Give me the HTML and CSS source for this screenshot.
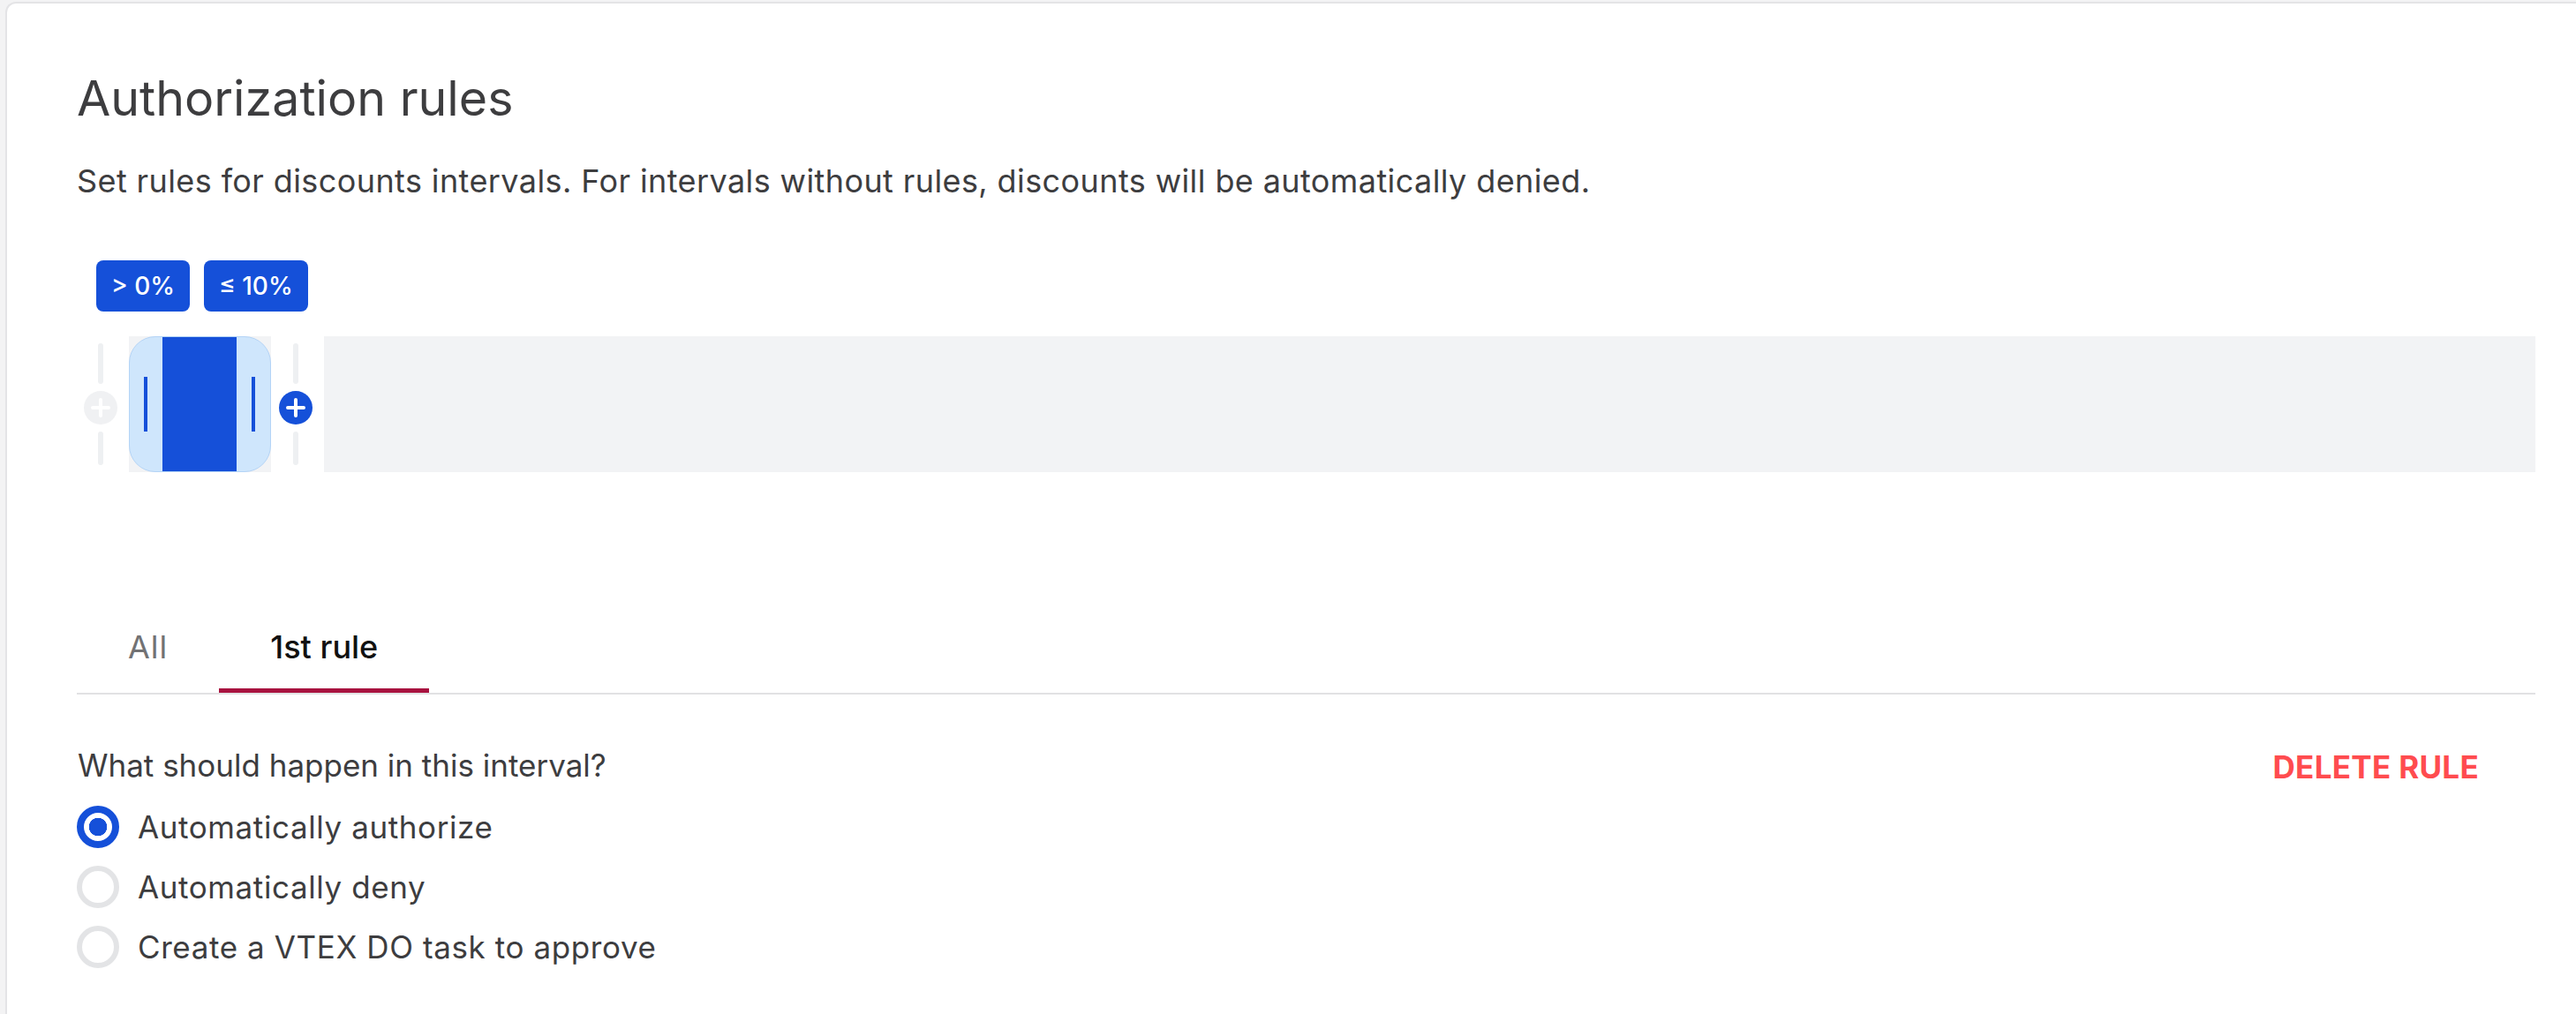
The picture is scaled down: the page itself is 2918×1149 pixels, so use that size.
FILE: index.html
```html
<!DOCTYPE html>
<html lang="en">
<head>
<meta charset="utf-8">
<title>Authorization rules</title>
<link rel="stylesheet" href="styles.css">
</head>
<body>
<main class="card">
  <h1 class="title">Authorization rules</h1>
  <p class="desc">Set rules for discounts intervals. For intervals without rules, discounts will be automatically denied.</p>

  <div class="badges">
    <span class="badge">&gt; 0%</span>
    <span class="badge">≤ 10%</span>
  </div>

  <div class="slider">
    <div class="handle">
      <span class="hline"></span>
      <span class="plus plus-off">
        <svg viewBox="0 0 38 38" width="38" height="38"><path d="M19 10v18M10 19h18" stroke="#fff" stroke-width="4" stroke-linecap="round"/></svg>
      </span>
      <span class="hline"></span>
    </div>
    <div class="segment">
      <div class="seg-inner">
        <span class="grip"></span>
        <span class="seg-fill"></span>
        <span class="grip"></span>
      </div>
    </div>
    <div class="handle">
      <span class="hline"></span>
      <span class="plus plus-on">
        <svg viewBox="0 0 38 38" width="38" height="38"><path d="M19 10v18M10 19h18" stroke="#fff" stroke-width="4" stroke-linecap="round"/></svg>
      </span>
      <span class="hline"></span>
    </div>
    <div class="track"></div>
  </div>

  <nav class="tabs">
    <span class="tab">All</span>
    <span class="tab tab-active">1st rule</span>
  </nav>

  <section class="rule">
    <div class="rule-left">
      <p class="question">What should happen in this interval?</p>
      <div class="options">
        <label class="option"><span class="radio radio-on"></span>Automatically authorize</label>
        <label class="option"><span class="radio"></span>Automatically deny</label>
        <label class="option"><span class="radio"></span>Create a VTEX DO task to approve</label>
      </div>
    </div>
    <button class="delete">DELETE RULE</button>
  </section>
</main>
</body>
</html>
```

FILE: styles.css
```css
html, body {
  margin: 0;
  padding: 0;
  overflow: hidden;
}
body {
  background: #f3f3f4;
  font-family: "Inter", "Liberation Sans", sans-serif;
  color: #3d3d3f;
  height: 1149px;
}
.card {
  box-sizing: border-box;
  margin: 2px 0 0 6px;
  background: #fff;
  border: 2px solid #e4e4e6;
  border-right: none;
  border-radius: 12px 0 0 0;
  padding: 75px 46px 0 79px;
  height: 1300px;
}
.title {
  margin: 0;
  font-size: 55.5px;
  line-height: 64px;
  font-weight: 400;
  color: #3d3d3f;
}
.desc {
  margin: 38px 0 0;
  font-size: 36px;
  line-height: 48px;
  color: #3d3d3f;
  letter-spacing: 0.4px;
}
.badges {
  display: flex;
  gap: 16px;
  margin: 66px 0 0 22px;
}
.badge {
  box-sizing: border-box;
  height: 58px;
  padding: 0 17px;
  border-radius: 8px;
  background: #1550d9;
  color: #fff;
  font-size: 28px;
  line-height: 58px;
  font-weight: 500;
}
.slider {
  display: flex;
  align-items: stretch;
  height: 154px;
  margin-top: 28px;
}
.handle {
  width: 38px;
  margin-left: 8px;
  display: flex;
  flex-direction: column;
  align-items: center;
  justify-content: center;
  gap: 8px;
}
.handle + .segment { margin-left: 13px; }
.segment + .handle { margin-left: 9px; }
.hline {
  width: 6px;
  height: 46px;
  border-radius: 3px;
  background: #eef0f2;
}
.hline:last-child { height: 38px; }
.plus {
  width: 38px;
  height: 38px;
  border-radius: 50%;
  display: block;
}
.plus svg { display: block; }
.plus-off { background: #f0f1f3; }
.plus-on { background: #1550d9; }
.segment {
  width: 161px;
  background: #f2f3f5;
}
.seg-inner {
  box-sizing: border-box;
  height: 100%;
  border-radius: 30px;
  background: #cfe6fc;
  border: 1px solid #b4d4f6;
  overflow: hidden;
  display: flex;
  align-items: center;
  padding-left: 16px;
}
.grip {
  width: 4px;
  height: 62px;
  background: #1550d9;
  flex: none;
}
.seg-fill {
  align-self: stretch;
  width: 84px;
  flex: none;
  background: #1550d9;
  margin: -1px 17px;
}
.track {
  flex: 1;
  margin-left: 13px;
  background: #f2f3f5;
}
.tabs {
  display: flex;
  margin-top: 150px;
  border-bottom: 2px solid #e1e1e3;
}
.tab {
  padding: 24px 58px 23px;
  font-size: 36px;
  line-height: 48px;
  color: #727274;
  border-bottom: 5px solid transparent;
}
.tab:first-child { letter-spacing: 1px; }
.tab-active {
  color: #111;
  font-weight: 500;
  border-bottom-color: #a8123f;
}
.rule {
  display: flex;
  justify-content: space-between;
  align-items: flex-start;
}
.question {
  margin: 56px 0 0 1px;
  font-size: 35px;
  line-height: 48px;
  color: #3d3d3f;
}
.options {
  display: flex;
  flex-direction: column;
  gap: 20px;
  margin-top: 22px;
}
.option {
  display: flex;
  align-items: center;
  gap: 21px;
  font-size: 35px;
  line-height: 48px;
  color: #3d3d3f;
  letter-spacing: 0.6px;
}
.radio {
  box-sizing: border-box;
  width: 48px;
  height: 48px;
  border-radius: 50%;
  border: 6px solid #e3e4e6;
  background: #fff;
  flex: none;
}
.radio-on {
  border: 8px solid #1550d9;
  background: radial-gradient(circle, #1550d9 0 10px, #fff 10.5px);
}
.delete {
  margin: 58px 64px 0 0;
  padding: 0;
  border: none;
  background: none;
  font-family: "Inter", "Liberation Sans", sans-serif;
  font-size: 35px;
  line-height: 48px;
  font-weight: 700;
  color: #ff4c4f;
  letter-spacing: 0.3px;
}
```
